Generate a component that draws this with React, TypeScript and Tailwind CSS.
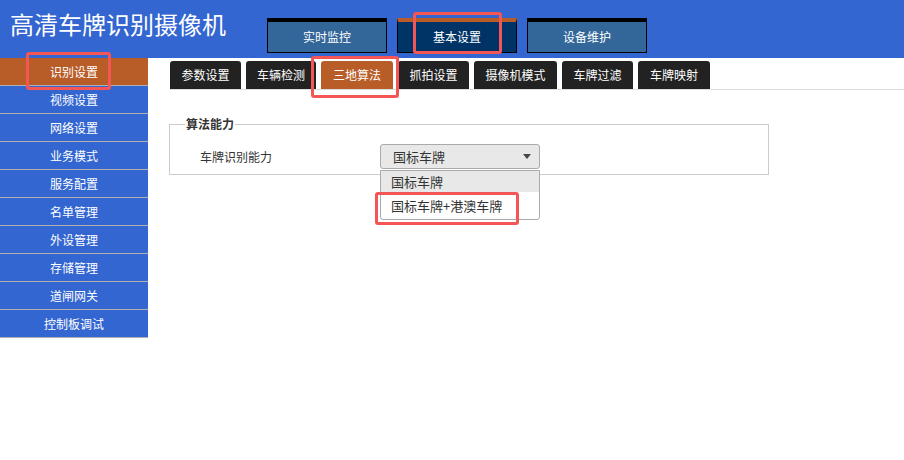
import { useState } from 'react';

const topTabs = ['实时监控', '基本设置', '设备维护'];
const sideItems = ['识别设置', '视频设置', '网络设置', '业务模式', '服务配置', '名单管理', '外设管理', '存储管理', '道闸网关', '控制板调试'];
const subTabs = [
  { name: '参数设置', w: 'w-[71px]' },
  { name: '车辆检测', w: 'w-[70px]' },
  { name: '三地算法', w: 'w-[72px]' },
  { name: '抓拍设置', w: 'w-[71px]' },
  { name: '摄像机模式', w: 'w-[83px]' },
  { name: '车牌过滤', w: 'w-[71px]' },
  { name: '车牌映射', w: 'w-[72px]' },
];

export default function App() {
  const [top] = useState('基本设置');
  const [side] = useState('识别设置');
  const [sub] = useState('三地算法');

  return (
    <div className="relative w-[904px] h-[460px] bg-white overflow-hidden font-['Noto_Sans_CJK_SC',sans-serif] text-[12px]">
      {/* Header */}
      <div className="flex h-[58px] bg-[#3366d0]">
        <div className="w-[267px] pl-[10px] pt-[8px] text-white text-[24px] leading-[32px]">高清车牌识别摄像机</div>
        <div className="flex gap-[10px] pt-[18px]">
          {topTabs.map((t) => (
            <div
              key={t}
              className={`w-[120px] h-[35px] flex items-center justify-center text-white border border-black border-t-4 ${
                t === top ? 'bg-[#003366] border-t-[#b85c28]' : 'bg-[#336699]'
              }`}
            >
              {t}
            </div>
          ))}
        </div>
      </div>

      <div className="flex">
        {/* Sidebar */}
        <div className="w-[148px] flex flex-col">
          {sideItems.map((s) => (
            <div
              key={s}
              className={`h-[28px] flex items-center justify-center text-white text-[12px] border-b border-[#b0b0b0] ${
                s === side ? 'bg-[#b85c28]' : 'bg-[#3366d0]'
              }`}
            >
              {s}
            </div>
          ))}
        </div>

        {/* Content */}
        <div className="flex-1 pt-[3px]">
          <div className="ml-[22px] flex gap-[5px] border-b border-[#dddddd]">
            {subTabs.map((t) => (
              <div
                key={t.name}
                className={`${t.w} h-[28px] rounded-t-[3px] flex items-center justify-center text-white ${
                  t.name === sub ? 'bg-[#b85c28]' : 'bg-[#222222]'
                }`}
              >
                {t.name}
              </div>
            ))}
          </div>

          <fieldset className="ml-[21px] mt-[27px] w-[600px] h-[58px] border border-[#cccccc] px-[15px]">
            <legend className="px-[1px] text-[12px] font-bold text-[#333333] leading-[14px]">算法能力</legend>
            <div className="flex items-center mt-[13px]">
              <div className="w-[195px] pl-[15px] text-[#333333]">车牌识别能力</div>
              <div className="relative">
                <div className="w-[160px] h-[25px] rounded-[3px] border border-[#aaaaaa] bg-[#e8e8e8] flex items-center justify-between pl-[12px] pr-[8px] text-[13px] text-[#333333]">
                  <span>国标车牌</span>
                  <svg width="8" height="5" viewBox="0 0 8 5">
                    <path d="M0 0 L8 0 L4 5 Z" fill="#444444" />
                  </svg>
                </div>
                <div className="absolute left-0 top-[26px] w-[160px] h-[50px] rounded-b-[3px] border border-[#aaaaaa] bg-white text-[13px] text-[#333333] z-10">
                  <div className="h-[21px] bg-[#e8e8e8] pl-[10px] leading-[21px]">国标车牌</div>
                  <div className="h-[27px] pl-[10px] leading-[28px]">国标车牌+港澳车牌</div>
                </div>
              </div>
            </div>
          </fieldset>
        </div>
      </div>

      {/* Annotation boxes */}
      <div className="absolute left-[26px] top-[52px] w-[85px] h-[38px] border-[3px] border-[#f45555] rounded-[3px]" />
      <div className="absolute left-[413px] top-[12px] w-[89px] h-[42px] border-[3px] border-[#f45555] rounded-[3px]" />
      <div className="absolute left-[311px] top-[56px] w-[88px] h-[42px] border-[3px] border-[#f45555] rounded-[3px]" />
      <div className="absolute left-[375px] top-[192px] w-[144px] h-[33px] border-[3px] border-[#f45555] rounded-[3px] z-20" />
    </div>
  );
}
